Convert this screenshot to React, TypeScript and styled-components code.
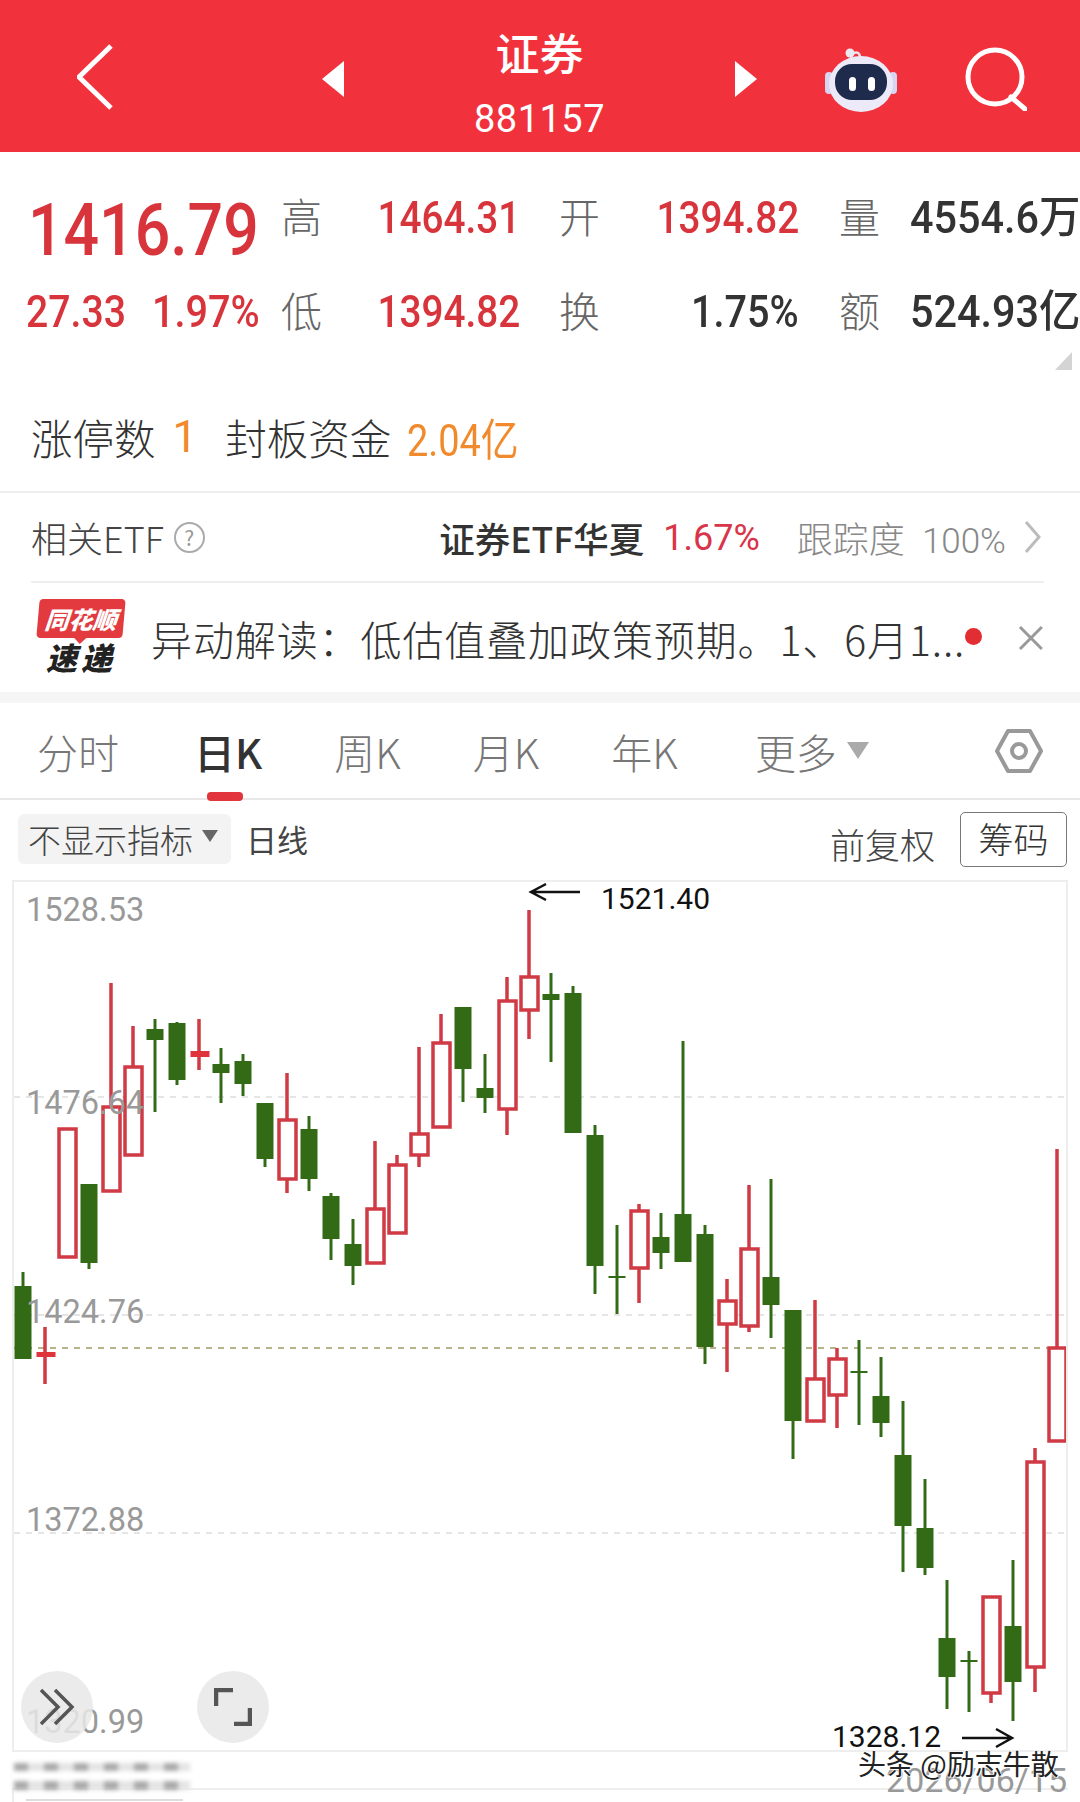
import React from 'react';
import styled, { createGlobalStyle } from 'styled-components';

const CJK = '"Noto Sans CJK SC", "Noto Sans", sans-serif';
const ROBOTO = 'Roboto, "Noto Sans CJK SC", sans-serif';

// x = 23 + 22 * index, [high, bodyTop, bodyBottom, low]
type Candle = { up: boolean; solid?: boolean; y: [number, number, number, number] };
const g = (a: number, b: number, c: number, d: number): Candle => ({ up: false, y: [a, b, c, d] });
const r = (a: number, b: number, c: number, d: number): Candle => ({ up: true, y: [a, b, c, d] });
const rs = (a: number, b: number, c: number, d: number): Candle => ({ up: true, solid: true, y: [a, b, c, d] });

const candles: Candle[] = [
  g(1272, 1286, 1359, 1359),
  rs(1327, 1352, 1357, 1384),
  r(1129, 1129, 1257, 1257),
  g(1184, 1184, 1263, 1269),
  r(983, 1107, 1191, 1191),
  r(1026, 1067, 1155, 1155),
  g(1019, 1029, 1040, 1112),
  g(1022, 1023, 1080, 1085),
  rs(1019, 1051, 1057, 1070),
  g(1048, 1064, 1073, 1103),
  g(1054, 1061, 1084, 1096),
  g(1103, 1103, 1159, 1167),
  r(1073, 1120, 1179, 1193),
  g(1116, 1129, 1179, 1191),
  g(1193, 1196, 1239, 1260),
  g(1219, 1244, 1266, 1285),
  r(1141, 1209, 1263, 1263),
  r(1155, 1165, 1233, 1233),
  r(1047, 1134, 1155, 1167),
  r(1014, 1043, 1127, 1127),
  g(1007, 1007, 1069, 1102),
  g(1054, 1088, 1098, 1113),
  r(977, 1001, 1109, 1135),
  r(910, 977, 1010, 1039),
  g(973, 994, 1000, 1062),
  g(986, 993, 1133, 1133),
  g(1125, 1135, 1266, 1294),
  g(1225, 1276, 1278, 1314),
  r(1204, 1211, 1268, 1303),
  g(1213, 1237, 1253, 1269),
  g(1041, 1214, 1262, 1262),
  g(1225, 1234, 1347, 1364),
  r(1279, 1301, 1324, 1372),
  r(1185, 1249, 1326, 1332),
  g(1179, 1277, 1305, 1338),
  g(1310, 1310, 1421, 1459),
  r(1300, 1379, 1421, 1421),
  r(1348, 1359, 1395, 1428),
  g(1340, 1371, 1373, 1425),
  g(1357, 1396, 1423, 1437),
  g(1401, 1455, 1526, 1572),
  g(1479, 1528, 1568, 1575),
  g(1580, 1638, 1677, 1709),
  g(1651, 1660, 1662, 1712),
  r(1596, 1597, 1693, 1703),
  g(1560, 1626, 1682, 1721),
  r(1448, 1462, 1667, 1692),
  r(1149, 1348, 1441, 1441),
];

const GREEN = '#336a16';
const RED = '#cf3a45';

const axis = [
  { text: '1528.53', y: 910 },
  { text: '1476.64', y: 1103 },
  { text: '1424.76', y: 1312 },
  { text: '1372.88', y: 1520 },
  { text: '1320.99', y: 1722 },
];

const GlobalStyle = createGlobalStyle`
  html, body { margin: 0; padding: 0; background: #fff; }
  * { box-sizing: border-box; }
`;

const Page = styled.div`
  position: relative;
  width: 1080px;
  height: 1802px;
  overflow: hidden;
  background: #fff;
  font-family: ${CJK};
`;

const Header = styled.header`
  height: 152px;
  background: #f1323c;
  display: grid;
  grid-template-columns: 245px 22px 391px 22px 68px 72px 68px 62px;
  padding: 6px 0 0 77px;
  align-items: center;
  color: #fff;
`;

const Title = styled.div`
  display: flex;
  flex-direction: column;
  align-items: center;
  gap: 16px;
  margin-top: 12px;
`;

const TitleName = styled.div`
  font-size: 44px;
  line-height: 52px;
  font-weight: 500;
`;

const TitleCode = styled.div`
  font-family: ${ROBOTO};
  font-size: 38px;
  line-height: 50px;
  letter-spacing: 0.5px;
`;

const BackIcon = styled.svg`
  margin-top: -5px;
`;

// the app's digits are narrower than any installed face
const Narrow = styled.span<{ $sx: number; $end?: boolean }>`
  display: inline-block;
  white-space: nowrap;
  transform: scaleX(${({ $sx }) => $sx});
  transform-origin: ${({ $end }) => ($end ? 'right' : 'left')} center;
`;

const Stats = styled.section`
  position: relative;
  height: 248px;
  padding: 38px 0 0 26px;
  display: grid;
  grid-template-columns: 255px 41px 198px 80px 199px 81px 200px;
  grid-template-rows: 50px 50px;
  row-gap: 44px;
  align-items: center;
`;

const BigPrice = styled.div`
  font-family: ${ROBOTO};
  font-size: 73px;
  line-height: 50px;
  color: #d8343c;
  font-weight: 500;
  padding-left: 2px;
  margin-top: 30px;
  height: 50px;
`;

const ChangeRow = styled.div`
  width: 234px;
  display: flex;
  justify-content: space-between;
  font-family: ${ROBOTO};
  font-size: 44px;
  font-weight: 500;
  line-height: 50px;
  margin-top: 6px;
  color: #d8343c;
`;

const StatLabel = styled.div`
  font-size: 41px;
  line-height: 50px;
  font-weight: 300;
  color: #666;
  text-align: right;
`;

const StatValue = styled.div<{ $dark?: boolean }>`
  font-family: ${ROBOTO};
  font-size: 44px;
  font-weight: 500;
  line-height: 50px;
  margin-top: 6px;
  text-align: right;
  white-space: nowrap;
  color: ${({ $dark }) => ($dark ? '#333' : '#d8343c')};
`;

const TotalValue = styled(StatValue)`
  text-align: left;
  padding-left: 30px;
`;

const Corner = styled.div`
  position: absolute;
  left: 1055px;
  top: 200px;
  width: 0;
  height: 0;
  border-left: 17px solid transparent;
  border-bottom: 18px solid #d4d4d4;
`;

const LimitRow = styled.div`
  height: 93px;
  padding: 0 0 18px 31px;
  display: flex;
  align-items: center;
  font-size: 41.5px;
  font-weight: 300;
  color: #333;
  border-bottom: 2px solid #eee;
`;

const LimitValue = styled.span<{ $gap: number; $left: number }>`
  font-family: ${ROBOTO};
  font-size: 44px;
  font-weight: 400;
  color: #f08a2c;
  margin: 0 ${({ $gap }) => $gap}px 0 ${({ $left }) => $left}px;
`;

const EtfRow = styled.div`
  height: 90px;
  margin: 0 36px 0 31px;
  display: flex;
  align-items: center;
  border-bottom: 2px solid #eee;
  font-size: 36px;
  color: #444;
`;

const EtfLabel = styled.span`
  font-weight: 300;
`;

const HelpMark = styled.span`
  width: 31px;
  height: 31px;
  margin-left: 10px;
  border: 2px solid #aaa;
  border-radius: 50%;
  color: #999;
  font-size: 21px;
  line-height: 27px;
  text-align: center;
`;

const EtfName = styled.span`
  margin-left: auto;
  font-weight: 500;
  font-size: 35.5px;
  color: #333;
`;

const EtfPct = styled.span`
  font-family: ${ROBOTO};
  font-size: 36px;
  margin-left: 19px;
  margin-top: 2px;
  color: #d8344a;
`;

const EtfTrack = styled.span`
  margin-left: 37px;
  font-size: 36px;
  font-weight: 300;
  color: #888;
`;

const EtfTrackNum = styled.span`
  font-family: ${ROBOTO};
  margin-left: 17px;
  font-size: 35px;
`;

const EtfChevron = styled.svg`
  margin: 0 2px 0 18px;
`;

const NoticeRow = styled.div`
  height: 109px;
  padding: 0 36px 0 38px;
  display: flex;
  align-items: center;
`;

const Logo = styled.div`
  width: 86px;
  display: flex;
  flex-direction: column;
  align-items: center;
  margin-top: -4px;
`;

const LogoBadge = styled.div`
  position: relative;
  width: 86px;
  height: 39px;
  background: #e23a3e;
  border-radius: 4px;
  transform: skewX(-5deg);
  color: #fff;
  font-size: 24px;
  line-height: 39px;
  font-weight: 900;
  font-style: italic;
  text-align: center;
  white-space: nowrap;

  &:after {
    content: '';
    position: absolute;
    left: 37px;
    top: 38px;
    border-left: 7px solid transparent;
    border-right: 7px solid transparent;
    border-top: 7px solid #e23a3e;
  }
`;

const LogoWord = styled.div`
  margin-top: 3px;
  font-size: 31px;
  line-height: 32px;
  font-weight: 900;
  font-style: italic;
  letter-spacing: 4px;
  color: #222;
`;

const NoticeText = styled.div`
  margin-left: 27px;
  font-size: 41px;
  font-weight: 300;
  color: #333;
  white-space: nowrap;
  flex: 1;
  letter-spacing: 0.9px;
`;

const Dot = styled.span`
  width: 17px;
  height: 17px;
  border-radius: 50%;
  background: #e22d32;
  margin-right: 36px;
  margin-top: -2px;
`;

const Band = styled.div`
  height: 11px;
  background: #f5f5f5;
`;

const Tabs = styled.nav`
  position: relative;
  height: 97px;
  padding: 0 37px;
  display: flex;
  align-items: center;
  gap: 72px;
  border-bottom: 2px solid #e8e8e8;
`;

const Tab = styled.span<{ $active?: boolean }>`
  position: relative;
  font-size: 41px;
  font-weight: ${({ $active }) => ($active ? 500 : 300)};
  color: ${({ $active }) => ($active ? '#333' : '#777')};
  display: flex;
  align-items: center;
  white-space: nowrap;

  &:first-child {
    margin-right: 3px;
  }

  &:nth-child(6) {
    margin-left: 5px;
  }

  ${({ $active }) =>
    $active &&
    `
    &:after {
      content: '';
      position: absolute;
      left: 13px;
      bottom: -20px;
      width: 36px;
      height: 9px;
      border-radius: 4px;
      background: #e2343c;
    }
  `}
`;

const TabCaret = styled.span`
  width: 0;
  height: 0;
  margin-left: 10px;
  border-left: 11px solid transparent;
  border-right: 11px solid transparent;
  border-top: 17px solid #aaa;
`;

const TabTool = styled.span`
  margin-left: auto;
  display: flex;
`;

const Toolbar = styled.div`
  height: 80px;
  padding: 12px 13px 0 18px;
  display: flex;
  align-items: flex-start;
`;

const IndicatorPill = styled.div`
  width: 213px;
  height: 50px;
  margin-top: 2px;
  padding-left: 10px;
  display: flex;
  align-items: center;
  background: #f3f3f3;
  border-radius: 6px;
  font-size: 33px;
  font-weight: 300;
  color: #444;
  white-space: nowrap;
`;

const PillCaret = styled.span`
  width: 0;
  height: 0;
  margin-left: 9px;
  margin-top: -6px;
  border-left: 8px solid transparent;
  border-right: 8px solid transparent;
  border-top: 12px solid #666;
`;

const PeriodName = styled.span`
  margin: 4px 0 0 15px;
  font-size: 31px;
  line-height: 46px;
  color: #444;
`;

const AdjustName = styled.span`
  margin: 8px 0 0 auto;
  font-size: 35px;
  line-height: 48px;
  font-weight: 300;
  color: #444;
`;

const ChipButton = styled.div`
  width: 107px;
  height: 55px;
  margin-left: 25px;
  border: 1.5px solid #777;
  border-radius: 5px;
  font-size: 35px;
  line-height: 50px;
  text-align: center;
  font-weight: 300;
  color: #333;
`;

const ChartBox = styled.div`
  position: relative;
  height: 872px;
  margin: 0 12px;
  border: 2px solid #eee;
`;

const ChartSvg = styled.svg`
  display: block;
  width: 100%;
  height: 100%;
`;

const AxisLabel = styled.span<{ $y: number }>`
  position: absolute;
  left: 12px;
  top: ${({ $y }) => $y - 882 - 20}px;
  font-family: ${ROBOTO};
  font-size: 32.5px;
  line-height: 40px;
  color: #999;
`;

const PriceNote = styled.span<{ $x: number; $y: number }>`
  position: absolute;
  left: ${({ $x }) => $x - 14}px;
  top: ${({ $y }) => $y - 882 - 18}px;
  font-family: ${ROBOTO};
  font-size: 30px;
  line-height: 36px;
  color: #111;
`;

const RoundButton = styled.div<{ $x: number }>`
  position: absolute;
  left: ${({ $x }) => $x - 36 - 14}px;
  top: 789px;
  width: 72px;
  height: 72px;
  border-radius: 50%;
  background: rgba(232, 232, 232, 0.85);
  display: flex;
  align-items: center;
  justify-content: center;
`;

const Footer = styled.div`
  height: 36px;
  padding: 11px 13px 0 14px;
  display: flex;
  justify-content: space-between;
`;

const BlurredDate = styled.div`
  width: 176px;
  height: 27px;
  filter: blur(2px);
  background:
    linear-gradient(transparent 0 8px, #fff 8px 18px, transparent 18px),
    repeating-linear-gradient(90deg, #aaa 0 14px, #e4e4e4 14px 30px);
`;

const DateLabel = styled.span`
  font-family: ${ROBOTO};
  font-size: 34px;
  line-height: 36px;
  margin-top: -1px;
  color: #999;
`;

const SubChart = styled.div`
  height: 14px;
  margin: 0 12px;
  border-top: 2px solid #eee;
  border-left: 2px solid #eee;
  padding: 9px 0 0 12px;
`;

const SubChartBar = styled.div`
  width: 157px;
  height: 2px;
  background: #ddd;
`;

const Watermark = styled.div`
  position: absolute;
  left: 858px;
  top: 1743px;
  font-size: 28px;
  line-height: 40px;
  color: #222;
  white-space: nowrap;
  text-shadow: 0 0 2px #fff, 0 0 2px #fff, 1px 1px 1px #fff;
`;

const Triangle: React.FC<{ right?: boolean }> = ({ right }) => (
  <svg width="22" height="36" viewBox="0 0 22 36">
    <path d={right ? 'M0 0L22 18L0 36Z' : 'M22 0L0 18L22 36Z'} fill="#fff" />
  </svg>
);

const Robot: React.FC = () => (
  <svg width="72" height="66" viewBox="0 0 72 66">
    <path d="M26 12c2-8 10-7 9 1" fill="none" stroke="#e8e3ee" strokeWidth="2.5" />
    <circle cx="25" cy="7" r="4.5" fill="#ece8f0" />
    <rect x="0" y="26" width="8" height="22" rx="4" fill="#d8d4f2" />
    <rect x="64" y="26" width="8" height="22" rx="4" fill="#d8d4f2" />
    <ellipse cx="36" cy="38" rx="32" ry="28" fill="#ece9f8" />
    <rect x="10" y="18" width="52" height="36" rx="17" fill="#1f2b4d" />
    <rect x="24" y="31" width="7" height="14" rx="3.5" fill="#fff" />
    <rect x="43" y="31" width="7" height="14" rx="3.5" fill="#fff" />
  </svg>
);

const Hex: React.FC = () => (
  <svg width="48" height="46" viewBox="0 0 48 46">
    <path
      d="M13 3H35L46 23L35 43H13L2 23Z"
      fill="none"
      stroke="#999"
      strokeWidth="4"
      strokeLinejoin="round"
    />
    <circle cx="24" cy="23" r="7" fill="none" stroke="#999" strokeWidth="4" />
  </svg>
);

const App: React.FC = () => (
  <Page>
    <GlobalStyle />
    <Header>
      <BackIcon width="36" height="66" viewBox="0 0 36 66">
        <path d="M34 2L2 33L34 64" fill="none" stroke="#fff" strokeWidth="5" />
      </BackIcon>
      <Triangle />
      <Title>
        <TitleName>证券</TitleName>
        <TitleCode>881157</TitleCode>
      </Title>
      <Triangle right />
      <span />
      <Robot />
      <span />
      <svg width="62" height="64" viewBox="0 0 62 64">
        <circle cx="30" cy="30" r="27" fill="none" stroke="#fff" strokeWidth="5" />
        <path d="M46 50L60 62" stroke="#fff" strokeWidth="5" strokeLinecap="round" />
      </svg>
    </Header>

    <Stats>
      <BigPrice>
        <Narrow $sx={0.857}>1416.79</Narrow>
      </BigPrice>
      <StatLabel>高</StatLabel>
      <StatValue>
        <Narrow $sx={0.88} $end>
          1464.31
        </Narrow>
      </StatValue>
      <StatLabel>开</StatLabel>
      <StatValue>
        <Narrow $sx={0.88} $end>
          1394.82
        </Narrow>
      </StatValue>
      <StatLabel>量</StatLabel>
      <TotalValue $dark>
        <Narrow $sx={0.94}>4554.6万</Narrow>
      </TotalValue>
      <ChangeRow>
        <Narrow $sx={0.89}>27.33</Narrow>
        <Narrow $sx={0.9} $end>
          1.97%
        </Narrow>
      </ChangeRow>
      <StatLabel>低</StatLabel>
      <StatValue>
        <Narrow $sx={0.88} $end>
          1394.82
        </Narrow>
      </StatValue>
      <StatLabel>换</StatLabel>
      <StatValue $dark>
        <Narrow $sx={0.9} $end>
          1.75%
        </Narrow>
      </StatValue>
      <StatLabel>额</StatLabel>
      <TotalValue $dark>
        <Narrow $sx={0.94}>524.93亿</Narrow>
      </TotalValue>
      <Corner />
    </Stats>

    <LimitRow>
      涨停数
      <LimitValue $left={17} $gap={28}>
        1
      </LimitValue>
      封板资金
      <LimitValue $left={16} $gap={0}>
        <Narrow $sx={0.86}>2.04亿</Narrow>
      </LimitValue>
    </LimitRow>

    <EtfRow>
      <EtfLabel>相关ETF</EtfLabel>
      <HelpMark>?</HelpMark>
      <EtfName>证券ETF华夏</EtfName>
      <EtfPct>1.67%</EtfPct>
      <EtfTrack>
        跟踪度
        <EtfTrackNum>100%</EtfTrackNum>
      </EtfTrack>
      <EtfChevron width="18" height="34" viewBox="0 0 18 34">
        <path d="M2 2L15 17L2 32" fill="none" stroke="#bbb" strokeWidth="3" />
      </EtfChevron>
    </EtfRow>

    <NoticeRow>
      <Logo>
        <LogoBadge>同花顺</LogoBadge>
        <LogoWord>速递</LogoWord>
      </Logo>
      <NoticeText>异动解读：低估值叠加政策预期。1、6月1...</NoticeText>
      <Dot />
      <svg width="26" height="24" viewBox="0 0 26 24">
        <path d="M2 1L24 23M24 1L2 23" stroke="#999" strokeWidth="3" />
      </svg>
    </NoticeRow>

    <Band />

    <Tabs>
      <Tab>分时</Tab>
      <Tab $active>日K</Tab>
      <Tab>周K</Tab>
      <Tab>月K</Tab>
      <Tab>年K</Tab>
      <Tab>
        更多
        <TabCaret />
      </Tab>
      <TabTool>
        <Hex />
      </TabTool>
    </Tabs>

    <Toolbar>
      <IndicatorPill>
        不显示指标
        <PillCaret />
      </IndicatorPill>
      <PeriodName>日线</PeriodName>
      <AdjustName>前复权</AdjustName>
      <ChipButton>筹码</ChipButton>
    </Toolbar>

    <ChartBox>
      <ChartSvg viewBox="14 882 1052 868" preserveAspectRatio="none">
        <path d="M14 1097H1066M14 1315H1066M14 1533H1066" stroke="#ddd" strokeWidth="1.5" strokeDasharray="6 6" />
        <path d="M14 1348H1066" stroke="#b5b28c" strokeWidth="2" strokeDasharray="6 6" />
        {candles.map((c, i) => {
          const x = 23 + 22 * i;
          const [high, top, bottom, low] = c.y;
          const hollow = c.up && !c.solid;
          return (
            <g key={i}>
              <path d={`M${x} ${high}V${low}`} stroke={c.up ? RED : GREEN} strokeWidth={c.up ? 3.5 : 3} />
              {hollow ? (
                <rect x={x - 8} y={top} width={17} height={bottom - top} fill="#fff" stroke={RED} strokeWidth={3.5} />
              ) : (
                <rect
                  x={x - 8.5}
                  y={top}
                  width={c.solid ? 19 : 17}
                  height={bottom - top}
                  fill={c.solid ? '#e0343c' : GREEN}
                />
              )}
            </g>
          );
        })}
        <path d="M580 892H531M546 884L531 892L546 900" fill="none" stroke="#111" strokeWidth="2.5" />
        <path d="M962 1738H1012M996 1729L1012 1738L996 1747" fill="none" stroke="#111" strokeWidth="2.5" />
      </ChartSvg>
      {axis.map((a) => (
        <AxisLabel key={a.text} $y={a.y}>
          {a.text}
        </AxisLabel>
      ))}
      <PriceNote $x={601} $y={899}>
        1521.40
      </PriceNote>
      <PriceNote $x={832} $y={1737}>
        1328.12
      </PriceNote>
      <RoundButton $x={57}>
        <svg width="36" height="38" viewBox="0 0 36 38">
          <path d="M2 2L19 19L2 36M16 2L33 19L16 36" fill="none" stroke="#555" strokeWidth="3.5" />
        </svg>
      </RoundButton>
      <RoundButton $x={233}>
        <svg width="38" height="38" viewBox="0 0 38 38">
          <path d="M2 18V2H19M36 20V36H20" fill="none" stroke="#555" strokeWidth="4.5" />
        </svg>
      </RoundButton>
    </ChartBox>

    <Footer>
      <BlurredDate />
      <DateLabel>2026/06/15</DateLabel>
    </Footer>
    <SubChart>
      <SubChartBar />
    </SubChart>
    <Watermark>头条 @励志牛散</Watermark>
  </Page>
);

export default App;
